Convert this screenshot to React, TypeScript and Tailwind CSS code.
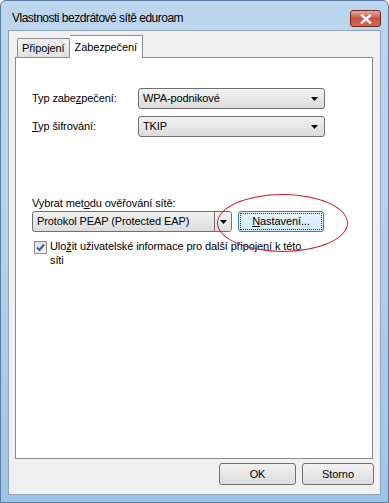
import React from "react";

const font = { fontFamily: '"Liberation Sans", Arial, sans-serif' };

function Combo({ text, className, split }: { text: string; className: string; split?: boolean }) {
  return (
    <div className={`flex items-center h-[21px] rounded-[3px] border border-[#707070] bg-gradient-to-b from-[#f2f2f2] to-[#dcdcdc] ${className}`}>
      <span className="flex-1 pl-[4px] text-[11px] tracking-[-0.1px] text-black leading-none">{text}</span>
      {split ? (
        <div className="w-[17px] h-full border-l border-[#707070] rounded-r-[2px] bg-gradient-to-b from-[#f7f7f7] to-[#e0e0e0] flex items-center justify-center">
          <svg width="9" height="6" viewBox="0 0 9 6">
            <path d="M1 1h7l-3.5 4z" fill="#000" />
          </svg>
        </div>
      ) : (
        <svg width="16" height="19" viewBox="0 0 16 19" className="mr-[1px]">
          <path d="M4 8h7l-3.5 4z" fill="#000" />
        </svg>
      )}
    </div>
  );
}

export default function App() {
  return (
    <div style={font} className="w-[389px] h-[503px] flex flex-col text-[11px] tracking-[-0.1px] bg-gradient-to-b from-[#bcd6ee] via-[#b6d0ea] to-[#9fc4e8] rounded-t-[6px] border border-[#5a7ea6] overflow-hidden">
      <div className="h-[29px] flex items-start justify-between pl-[11px] pr-[7px]">
        <span className="text-[12px] tracking-[-0.5px] text-black mt-[11px] leading-none">Vlastnosti bezdrátové sítě eduroam</span>
        <div className="w-[31px] h-[17px] mt-[9px] rounded-[3px] border border-[#6e2a22] bg-gradient-to-b from-[#e8a89c] via-[#c9503e] to-[#d46a55] flex items-center justify-center">
          <svg width="12" height="10" viewBox="0 0 12 10">
            <path d="M2 1.5l8 7M10 1.5l-8 7" stroke="#fff" strokeWidth="2.4" strokeLinecap="square" />
          </svg>
        </div>
      </div>
      <div className="flex-1 mx-[7px] mb-[7px] bg-[#f0f0f0] border border-[#8da2bb] flex flex-col">
        <div className="flex items-end pl-[8px] pt-[4px] h-[26px]">
          <div className="h-[19px] px-[4px] border border-[#898c95] border-b-0 rounded-t-[2px] bg-gradient-to-b from-[#f2f2f2] to-[#e1e1e1] flex items-center">
            Připojení
          </div>
          <div className="h-[23px] px-[5px] border border-[#898c95] border-b-0 border-l-0 bg-white flex items-start pt-[3px] -mb-px relative z-10">
            Zabezpečení
          </div>
        </div>
        <div className="ml-[6px] mr-[7px] h-[402px] bg-white border border-[#898c95] relative">
          <div className="pl-[16px] pt-[30px]">
            <div className="flex items-center h-[21px]">
              <span className="w-[106px]">Typ zabe<u>z</u>pečení:</span>
              <Combo text="WPA-podnikové" className="w-[187px]" />
            </div>
            <div className="flex items-center h-[21px] mt-[7px]">
              <span className="w-[106px]"><u>T</u>yp šifrování:</span>
              <Combo text="TKIP" className="w-[187px]" />
            </div>
            <div className="mt-[59px] leading-[15px]">Vybrat met<u>o</u>du ověřování sítě:</div>
            <div className="flex items-center mt-[0px]">
              <Combo text="Protokol PEAP (Protected EAP)" className="w-[200px]" split />
              <div className="ml-[6px] w-[86px] h-[21px] rounded-[3px] border border-[#3c7fb1] p-[1px] bg-gradient-to-b from-[#eaf6fd] to-[#d0e9f8]">
                <div className="w-full h-full border border-dotted border-[#333] flex items-center justify-center">
                  <span><u>N</u>astavení...</span>
                </div>
              </div>
            </div>
            <div className="flex items-start mt-[7px] ml-[2px]">
              <div className="w-[13px] h-[13px] mt-[2px] border border-[#8f8f8f] bg-gradient-to-b from-[#dcdcdc] to-[#f8f8f8] flex items-center justify-center shrink-0">
                <svg width="9" height="9" viewBox="0 0 9 9">
                  <path d="M1 4.5l2.5 2.5L8 1.5" stroke="#3c5ea8" strokeWidth="2" fill="none" />
                </svg>
              </div>
              <div className="ml-[3px] leading-[14px] w-[258px]">
                Ulo<u>ž</u>it uživatelské informace pro další připojení k této síti
              </div>
            </div>
          </div>
          <div className="absolute left-[201px] top-[136px] w-[131px] h-[58px] rounded-[50%] border border-[#c8202e]" />
        </div>
        <div className="flex justify-end gap-[6px] mt-[4px] mr-[6px]">
          <div className="w-[77px] h-[22px] rounded-[3px] border border-[#707070] bg-gradient-to-b from-[#f2f2f2] to-[#dcdcdc] flex items-center justify-center">OK</div>
          <div className="w-[72px] h-[22px] rounded-[3px] border border-[#707070] bg-gradient-to-b from-[#f2f2f2] to-[#dcdcdc] flex items-center justify-center">Storno</div>
        </div>
      </div>
    </div>
  );
}
